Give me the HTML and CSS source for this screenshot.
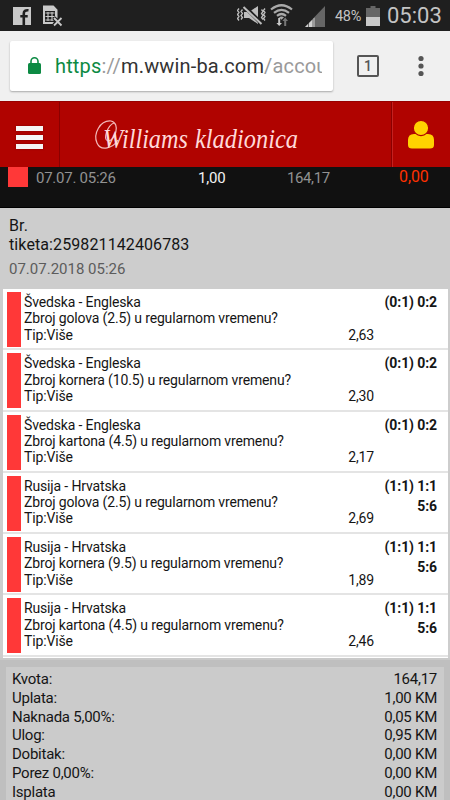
FILE: index.html
```html
<!DOCTYPE html>
<html lang="bs">
<head>
    <meta charset="UTF-8">
    <meta name="viewport" content="width=device-width, initial-scale=1.0">
    <title>Williams kladionica</title>

    <link rel="stylesheet" href="styles.css">
</head>
<body>
    <div class="statusbar">
        <svg class="notifications" width="60" height="31" viewBox="0 0 60 31">
            <path fill="#c9c9c9" d="M0 7h18v18H0z"/>
            <path fill="none" stroke="#1f1f1f" stroke-width="2.6" d="M10.8 25v-11.5q0-3.7 4.7-3.2M7.3 16.2h7.4"/>
            <path fill="#c9c9c9" d="M30 5.500h10.500l4 4.200V24H30z"/>
            <path fill="#1f1f1f" d="M32 11h10v11H32z"/>
            <path fill="none" stroke="#c9c9c9" stroke-width="1.100" d="M32.500 13h9M32.500 16.500h9M32.500 20h9M35 12v9M39 12v9"/>
            <path fill="none" stroke="#1f1f1f" stroke-width="4" d="M41 18l7 7M48 18l-7 7"/>
            <path fill="none" stroke="#c9c9c9" stroke-width="1.800" d="M41 18l7.500 7.500M48.500 18l-7.500 7.500"/>
        </svg>
        <svg class="signals" width="94" height="31" viewBox="0 0 94 31">
            <!-- muted speaker -->
            <path fill="none" stroke="#bdbdbd" stroke-width="1.300" d="M2 8.500l-1.500 2 1.500 2-1.500 2 1.500 2-1.500 2 1.500 2M5.500 9.500l-1.500 2 1.500 2-1.500 2 1.500 2-1.500 2M24.500 9.500l1.500 2-1.500 2 1.500 2-1.500 2 1.500 2M28 8.500l-1.500 2 1.500 2-1.500 2 1.500 2-1.500 2 1.500 2"/>
            <path fill="#bdbdbd" d="M7 12h5l9-6v18l-9-6H7z"/>
            <path stroke="#1f1f1f" stroke-width="4" d="M7 6l17 17"/>
            <path stroke="#bdbdbd" stroke-width="2" d="M6.500 7l18 17"/>
            <!-- wifi -->
            <path fill="none" stroke="#a9a9a9" stroke-width="2.200" d="M34 9.500q10.500-8.500 21 0M37 12.800q7.500-6 15 0M40 15.800q4.500-3.600 9 0"/>
            <path fill="#a9a9a9" d="M42 17.300q2.500-1.800 5 0l-2.500 2.500z"/>
            <path fill="#c9c9c9" d="M41.200 18h2v5h1.800l-2.800 3-2.800-3h1.800z"/>
            <path fill="#777" d="M47.200 26h2v-5H51l-2.800-3.500-2.800 3.500h1.800z"/>
            <!-- mobile signal -->
            <path fill="#666" d="M88 6v21H68z"/>
            <path fill="#d0d0d0" d="M68 27l3-3v3zM72 23l3.500-3.500V27H72zM76.500 18.500L77.500 17.500V27h-1z"/>
        </svg>
        <span class="battery-level">48%</span>
        <svg class="battery" width="14" height="20" viewBox="0 0 14 20">
            <path fill="#666" d="M4.500 0h5v2H14v18H0V2h4.500z"/>
            <path fill="#c9c9c9" d="M0 11h14v9H0z"/>
        </svg>
        <span class="clock">05:03</span>
    </div>

    <div class="toolbar">
        <div class="address">
            <svg class="lock" width="13" height="17" viewBox="0 0 13 17">
                <rect y="6" width="13" height="11" rx="1.500" fill="#0c8a43"/>
                <path fill="none" stroke="#0c8a43" stroke-width="1.600" d="M3 7V4.300a3.500 3.500 0 0 1 7 0V7"/>
            </svg>
            <div class="url"><span class="scheme">https</span><span class="muted">://</span>m.wwin-ba.com<span class="muted">/accou</span></div>
        </div>
        <div class="tabs">1</div>
        <svg class="dots" width="6" height="22" viewBox="0 0 6 22">
            <circle cx="3" cy="3.500" r="2.600"/>
            <circle cx="3" cy="11" r="2.600"/>
            <circle cx="3" cy="18.500" r="2.600"/>
        </svg>
    </div>

    <div class="header">
        <div class="menu">
            <div class="menu-line"></div>
            <div class="menu-line"></div>
            <div class="menu-line"></div>
        </div>
        <svg class="logo" width="331" height="66" viewBox="0 0 331 66">
            <path class="swash" d="M54 21C48 23 42 38 48 39C55 39 61 21 51 19C40 18 33 32 37 41C41 50 53 46 58 38"/>
            <text class="logo-text" x="43" y="46" textLength="85" lengthAdjust="spacingAndGlyphs">Williams</text>
            <text class="logo-text" x="135" y="46" textLength="103" lengthAdjust="spacingAndGlyphs">kladionica</text>
        </svg>
        <div class="user">
            <svg width="28" height="30" viewBox="0 0 28 30">
                <path fill="#ffd200" d="M1 25v-5q0-6 6-6h14q6 0 6 6v5q0 3.500-4 3.500H5Q1 28.500 1 25z"/>
                <circle cx="14" cy="8" r="7.700" fill="#ffd200" stroke="#b00300" stroke-width="1.200"/>
            </svg>
        </div>
    </div>

    <div class="summary">
        <div class="status"></div>
        <span class="date">07.07. 05:26</span>
        <span class="stake">1,00</span>
        <span class="odds">164,17</span>
        <span class="win">0,00</span>
    </div>

    <div class="ticket">
        <div class="ticket-number">Br.<br>tiketa:259821142406783</div>
        <div class="ticket-date">07.07.2018 05:26</div>
    </div>

    <div class="bets">
        <div class="bet">
            <div class="bet-status"></div>
            <div class="bet-info">Švedska - Engleska<br>Zbroj golova (2.5) u regularnom vremenu?<br><div class="tip"><span>Tip:Više</span><span>2,63</span></div></div>
            <div class="score">(0:1) 0:2</div>
        </div>
        <div class="bet">
            <div class="bet-status"></div>
            <div class="bet-info">Švedska - Engleska<br>Zbroj kornera (10.5) u regularnom vremenu?<br><div class="tip"><span>Tip:Više</span><span>2,30</span></div></div>
            <div class="score">(0:1) 0:2</div>
        </div>
        <div class="bet">
            <div class="bet-status"></div>
            <div class="bet-info">Švedska - Engleska<br>Zbroj kartona (4.5) u regularnom vremenu?<br><div class="tip"><span>Tip:Više</span><span>2,17</span></div></div>
            <div class="score">(0:1) 0:2</div>
        </div>
        <div class="bet">
            <div class="bet-status"></div>
            <div class="bet-info">Rusija - Hrvatska<br>Zbroj golova (2.5) u regularnom vremenu?<br><div class="tip"><span>Tip:Više</span><span>2,69</span></div></div>
            <div class="score">(1:1) 1:1<br>5:6</div>
        </div>
        <div class="bet">
            <div class="bet-status"></div>
            <div class="bet-info">Rusija - Hrvatska<br>Zbroj kornera (9.5) u regularnom vremenu?<br><div class="tip"><span>Tip:Više</span><span>1,89</span></div></div>
            <div class="score">(1:1) 1:1<br>5:6</div>
        </div>
        <div class="bet">
            <div class="bet-status"></div>
            <div class="bet-info">Rusija - Hrvatska<br>Zbroj kartona (4.5) u regularnom vremenu?<br><div class="tip"><span>Tip:Više</span><span>2,46</span></div></div>
            <div class="score">(1:1) 1:1<br>5:6</div>
        </div>
    </div>

    <div class="totals">
        <div class="totals-box">
            <div class="total"><span>Kvota:</span><span>164,17</span></div>
            <div class="total"><span>Uplata:</span><span>1,00 KM</span></div>
            <div class="total"><span>Naknada 5,00%:</span><span>0,05 KM</span></div>
            <div class="total"><span>Ulog:</span><span>0,95 KM</span></div>
            <div class="total"><span>Dobitak:</span><span>0,00 KM</span></div>
            <div class="total"><span>Porez 0,00%:</span><span>0,00 KM</span></div>
            <div class="total"><span>Isplata</span><span>0,00 KM</span></div>
        </div>
    </div>
</body>
</html>
```
FILE: styles.css
```css
* {
    box-sizing: border-box;
}

body {
    margin: 0;
    width: 450px;
    height: 800px;
    overflow: hidden;
    display: flex;
    flex-direction: column;
    font-family: Roboto, sans-serif;
    background-color: #cdcdcd;
    color: #151515;
}

/* Phone status bar */
.statusbar {
    flex: none;
    height: 31px;
    display: flex;
    align-items: center;
    padding-left: 13px;
    background-color: #1f1f1f;
    color: #c4c4c4;
}

.signals {
    margin-left: 164px;
}

.battery-level {
    width: 29px;
    margin-left: 4px;
    padding-top: 1px;
    font-size: 14.5px;
    letter-spacing: -0.3px;
}

.battery {
    margin-left: 2px;
}

.clock {
    margin-left: 7px;
    font-size: 22px;
}

/* Browser toolbar */
.toolbar {
    flex: none;
    height: 70px;
    display: flex;
    align-items: center;
    padding-left: 10px;
    background-color: #f0f0f0;
}

.address {
    width: 323px;
    height: 50px;
    margin-bottom: 1px;
    display: flex;
    align-items: center;
    padding-left: 18px;
    background-color: #fff;
    border-radius: 2px;
    box-shadow: 0 1px 2px rgba(0, 0, 0, 0.3);
}

.url {
    width: 267px;
    margin-left: 14px;
    overflow: hidden;
    white-space: nowrap;
    font-size: 20px;
    letter-spacing: 0.15px;
    color: #333;
}

.scheme {
    color: #0c8a43;
}

.muted {
    color: #9a9a9a;
}

.tabs {
    width: 22px;
    height: 22px;
    margin-left: 24px;
    border: 2px solid #555;
    border-radius: 2px;
    text-align: center;
    font-size: 14px;
    font-weight: 500;
    line-height: 18px;
    color: #555;
}

.dots {
    margin-left: 39px;
    fill: #555;
}

/* Site header */
.header {
    flex: none;
    height: 66px;
    display: flex;
    background-color: #b00300;
    border-top: 1px solid #980000;
}

.menu {
    width: 60px;
    display: flex;
    flex-direction: column;
    gap: 4px;
    padding: 24px 0 0 16px;
    border-right: 1px solid #8a0000;
}

.menu-line {
    width: 27px;
    height: 5px;
    background-color: #f5f5f5;
    box-shadow: 0 0 2px #700;
}

.logo-text {
    font-family: "Liberation Serif", serif;
    font-style: italic;
    font-size: 28px;
    fill: #ffd9d9;
}

.swash {
    fill: none;
    stroke: #f3baba;
    stroke-width: 1.2;
}

.user {
    flex: 1;
    padding: 18px 0 0 15px;
    border-left: 1px solid #8a0000;
    box-shadow: inset 1px 0 #c32220;
}

/* Selected ticket row */
.summary {
    flex: none;
    height: 41px;
    display: flex;
    padding-left: 8px;
    background-color: #111;
    border-bottom: 1px solid #000;
    font-size: 15px;
    line-height: 22px;
    color: #929292;
}

.status {
    width: 20px;
    height: 20px;
    background-color: #ff3838;
}

.date {
    width: 162px;
    padding-left: 8px;
    letter-spacing: -0.25px;
}

.stake {
    width: 89px;
    padding-left: 8px;
    letter-spacing: -0.2px;
    color: #f3f3f3;
}

.odds {
    width: 120px;
    padding-left: 8px;
    letter-spacing: -0.4px;
}

.win {
    font-size: 16px;
    line-height: 19px;
    letter-spacing: -0.1px;
    color: #ff3000;
}

/* Ticket info */
.ticket {
    flex: none;
    height: 81px;
    padding: 8px 9px 0;
    font-size: 16px;
    line-height: 19px;
}

.ticket-number {
    letter-spacing: 0.1px;
}

.ticket-date {
    margin-top: 6px;
    font-size: 15px;
    color: #5c5c5c;
}

/* List of bets */
.bets {
    flex: none;
    height: 369px;
    margin: 0 2px 0 3px;
    background-color: #fff;
}

.bet {
    height: 61.25px;
    display: flex;
    padding: 3px 11px 0 4px;
    border-bottom: 2px solid #e4e4e4;
    font-size: 14px;
    line-height: 16.35px;
}

.bet-status {
    width: 14px;
    height: 55px;
    background-color: #ff3838;
}

.bet-info {
    flex: 1;
    padding: 2px 0 0 3px;
    white-space: nowrap;
    letter-spacing: -0.15px;
}

.tip {
    width: 350px;
    display: flex;
    justify-content: space-between;
}

.score {
    margin-left: -80px;
    font-weight: bold;
    line-height: 20px;
    letter-spacing: -0.1px;
    text-align: right;
}

/* Totals */
.totals {
    flex: 1;
    padding: 7px 6px 0;
    background-color: #bfbfbf;
    border-top: 2px solid #c9c9c9;
}

.totals-box {
    height: 140px;
    padding: 3px 7px 0 6px;
    background-color: #cbcbcb;
    font-size: 15px;
    line-height: 18.8px;
    letter-spacing: -0.25px;
}

.total {
    display: flex;
    justify-content: space-between;
}
```
